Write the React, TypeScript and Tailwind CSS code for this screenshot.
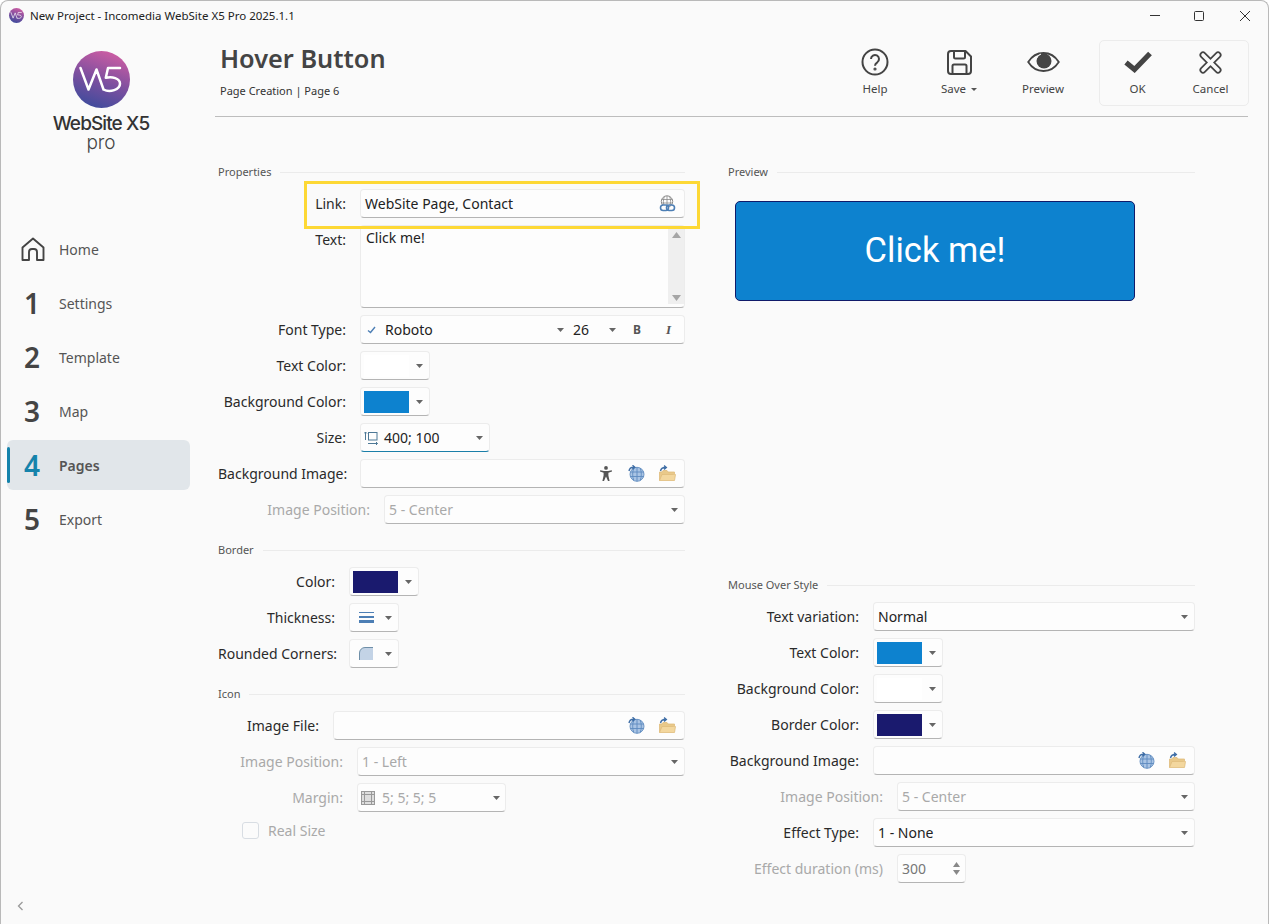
import React, { FunctionComponent, ReactNode } from 'react'
import clsx from 'clsx'

type Kids = { children?: ReactNode; className?: string }

const Caret: FunctionComponent<{ className?: string }> = ({ className }) => (
  <svg width="7" height="4" viewBox="0 0 7 4" className={clsx('shrink-0', className)}>
    <polygon points="0,0 7,0 3.5,4" fill="#666" />
  </svg>
)

const LogoMark: FunctionComponent<{ size: number; id: string }> = ({ size, id }) => (
  <svg width={size} height={size} viewBox="0 0 57 57">
    <defs>
      <linearGradient id={id} x1="0.7" y1="0" x2="0.35" y2="1">
        <stop offset="0" stopColor="#cf5da3" />
        <stop offset="0.55" stopColor="#7a4f9f" />
        <stop offset="1" stopColor="#3f4b9c" />
      </linearGradient>
    </defs>
    <circle cx="28.5" cy="28.5" r="28.5" fill={`url(#${id})`} />
    <path
      d="M7.5 17 L15.5 38.5 L23.5 18.5 L30.5 38.5 M47 17 H35 L32.8 26.8 C39 25.5 47 27 47 32.8 C47 38.5 37 42 30.5 38.5"
      fill="none"
      stroke="#fff"
      strokeWidth="2.5"
      strokeLinejoin="round"
      strokeLinecap="round"
    />
  </svg>
)

const GlobeLink = () => (
  <svg width="17" height="17" viewBox="0 0 17 17" fill="none">
    <circle cx="8" cy="6.5" r="5.7" stroke="#8a8a8a" strokeWidth="1" />
    <path d="M2.5 4.5h11M2.5 8h11M8 1v11M5.5 1.5c-1.5 3-1.5 7 0 10M10.5 1.5c1.5 3 1.5 7 0 10" stroke="#8a8a8a" strokeWidth="0.8" />
    <rect x="1.5" y="10" width="8" height="5.5" rx="2.7" fill="#fdfdfd" stroke="#4d7fb5" strokeWidth="1.6" />
    <rect x="7.5" y="10" width="8" height="5.5" rx="2.7" fill="none" stroke="#4d7fb5" strokeWidth="1.6" />
  </svg>
)

const GlobeArrow = () => (
  <svg width="17" height="17" viewBox="0 0 17 17" fill="none">
    <circle cx="9" cy="9.3" r="7" fill="#a9c4e4" stroke="#6f97c6" strokeWidth="1" />
    <path d="M2.3 7h13.5M2.3 11.5h13.5M9 2.3v14M5.8 3c-1.5 4-1.5 8.6 0 12.6M12.2 3c1.5 4 1.5 8.6 0 12.6" stroke="#5f8bbf" strokeWidth="0.9" />
    <path d="M1 6C1.5 3.3 3 2.2 5.5 2.2M4.5 0.3L6.8 2.2 4.5 4.1" stroke="#3f6ea6" strokeWidth="1.4" fill="none" />
  </svg>
)

const FolderArrow = () => (
  <svg width="17" height="17" viewBox="0 0 17 17" fill="none">
    <path d="M0.5 15.5V7h2.5l1-1.5h4l1 1.5h6.5v2" fill="#e9c98a" stroke="#e0bd7c" strokeWidth="0.8" />
    <path d="M0.5 15.5L3 9.5h13.5l-1 6z" fill="#f3d79e" stroke="#e0bd7c" strokeWidth="0.8" />
    <path d="M1.5 6C2 3.5 3.5 2.5 6 2.5M5 0.6L7.3 2.5 5 4.4" stroke="#3f6ea6" strokeWidth="1.4" fill="none" />
  </svg>
)

const Person = () => (
  <svg width="12" height="15" viewBox="0 0 12 15" fill="#555">
    <circle cx="6" cy="1.9" r="1.9" />
    <path d="M0.2 4.2L4 5h4l3.8-.8.2 1.3L8.4 6.7V9.5L9.6 15H8L6 10.5 4 15H2.4L3.6 9.5V6.7L0 5.5z" />
  </svg>
)

const Field: FunctionComponent<Kids> = ({ children, className }) => (
  <div
    className={clsx(
      'flex items-center rounded-[4px] border border-[#ececec] border-b-[#b4b4b4] bg-[#fdfdfd] text-[#222]',
      className,
    )}
  >
    {children}
  </div>
)

const Row: FunctionComponent<Kids & { label: string; labelW: string; off?: boolean }> = ({
  label,
  labelW,
  off,
  children,
  className,
}) => (
  <div className={clsx('flex h-[29px] items-center', className)}>
    <div className={clsx('shrink-0 whitespace-nowrap text-right', labelW, off ? 'text-[#a9a9a9]' : 'text-[#2a2a2a]')}>
      {label}
    </div>
    <div className="ml-[14px] flex min-w-0 flex-1">{children}</div>
  </div>
)

const Heading: FunctionComponent<Kids> = ({ children, className }) => (
  <div className={clsx('flex h-[14px] items-center gap-[9px] text-[11px] text-[#555]', className)}>
    <span>{children}</span>
    <div className="h-px flex-1 bg-[#ebebeb]" />
  </div>
)

const ColorPick: FunctionComponent<{ color: string }> = ({ color }) => (
  <Field className="h-[29px] w-[70px] pl-[3px]">
    <div className={clsx('h-[22px] w-[45px] shrink-0', color)} />
    <Caret className="ml-[7px]" />
  </Field>
)

const Select: FunctionComponent<Kids & { off?: boolean }> = ({ children, off, className }) => (
  <Field className={clsx('h-[29px] w-full pl-[4px] pr-[6px]', off && 'text-[#a9a9a9]', className)}>
    <span className="flex-1 truncate">{children}</span>
    <Caret />
  </Field>
)

const ToolButton: FunctionComponent<Kids & { label: ReactNode; width: string }> = ({ children, label, width }) => (
  <div className={clsx('flex flex-col items-center', width)}>
    <div className="flex h-[30px] items-center justify-center">{children}</div>
    <div className="mt-[4px] flex items-center gap-[5px] text-[11.5px] leading-[16px] text-[#444]">{label}</div>
  </div>
)

const Nav: FunctionComponent<Kids & { label: string; active?: boolean }> = ({ children, label, active }) => (
  <div className={clsx('relative ml-[6px] flex h-[50px] w-[183px] items-center rounded-[6px]', active && 'bg-[#e1e6ea]')}>
    {active && <div className="absolute left-0 top-[7px] h-[36px] w-[3px] rounded-full bg-[#1583ab]" />}
    <div className={clsx('flex w-[50px] justify-center text-[28px] font-semibold leading-none', active ? 'text-[#1583ab]' : 'text-[#444]')}>
      {children}
    </div>
    <div className={clsx('ml-[2px] text-[14px] text-[#555]', active && 'font-semibold text-[#444]')}>{label}</div>
  </div>
)

const App: FunctionComponent = () => {
  return (
    <div
      className="flex h-[924px] w-[1269px] flex-col overflow-hidden rounded-t-[8px] border-x border-t border-[#b9b9b9] bg-[#fafafa] text-[14px]"
      style={{ fontFamily: '"Noto Sans", sans-serif' }}
    >
      {/* title bar */}
      <div className="flex h-[29px] shrink-0 items-center">
        <div className="ml-[8px] mr-[6px]">
          <LogoMark size={15} id="tiny" />
        </div>
        <span className="text-[11.5px] text-[#222]">New Project - Incomedia WebSite X5 Pro 2025.1.1</span>
        <div className="ml-auto flex h-full text-[#333]">
          <div className="flex w-[45px] items-center justify-center">
            <div className="h-px w-[10px] bg-[#333]" />
          </div>
          <div className="flex w-[45px] items-center justify-center pr-[2px]">
            <div className="h-[10px] w-[10px] rounded-[1.5px] border border-[#333]" />
          </div>
          <div className="flex w-[46px] items-center justify-center">
            <svg width="10" height="10" viewBox="0 0 10 10" stroke="#333" strokeWidth="1">
              <path d="M0 0L10 10M10 0L0 10" />
            </svg>
          </div>
        </div>
      </div>

      <div className="flex min-h-0 flex-1">
        {/* sidebar */}
        <div className="relative flex w-[214px] shrink-0 flex-col">
          <div className="flex flex-col items-center pr-[14px] pt-[21px]">
            <LogoMark size={57} id="big" />
            <div
              className="mt-[6px] text-[19px] font-medium leading-[20px] tracking-[-0.9px] text-[#333]"
              style={{ fontFamily: 'Inter, sans-serif' }}
            >
              WebSite X5
            </div>
            <div
              className="text-[19px] font-light leading-[18px] text-[#444]"
              style={{ fontFamily: 'Inter, sans-serif' }}
            >
              pro
            </div>
          </div>
          <div className="mt-[72px] flex flex-col gap-[4px]">
            <Nav label="Home">
              <svg className="ml-[2px]" width="24" height="24" viewBox="0 0 24 24" fill="none" stroke="#444" strokeWidth="1.9" strokeLinejoin="round">
                <path d="M1.5 23V10.5L12 1.5l10.5 9V23h-6.5v-8a3 3 0 0 0-3-3h-2a3 3 0 0 0-3 3v8z" />
              </svg>
            </Nav>
            <Nav label="Settings">1</Nav>
            <Nav label="Template">2</Nav>
            <Nav label="Map">3</Nav>
            <Nav label="Pages" active>
              4
            </Nav>
            <Nav label="Export">5</Nav>
          </div>
          <svg className="absolute bottom-[13px] left-[16px]" width="7" height="10" viewBox="0 0 7 10" fill="none" stroke="#999" strokeWidth="1.3">
            <path d="M5.5 1L1.5 5l4 4" />
          </svg>
        </div>

        {/* main */}
        <div className="flex min-w-0 flex-1 flex-col">
          {/* header */}
          <div className="mr-[20px] flex h-[87px] shrink-0 border-b border-[#bdbdbd] pl-[5px]">
            <div>
              <div className="mt-[10px] text-[25.3px] font-semibold leading-[36px] text-[#444]">Hover Button</div>
              <div className="mt-[7px] text-[11px] leading-[16px] text-[#333]">Page Creation | Page 6</div>
            </div>
            <div className="-mr-px ml-auto flex items-start pt-[10px]">
              <div className="flex pt-[7px]">
                <ToolButton label="Help" width="w-[84px]">
                  <svg width="28" height="28" viewBox="0 0 28 28" fill="none" stroke="#444" strokeWidth="2">
                    <circle cx="14" cy="14" r="12.5" />
                    <path d="M10 11a4 4 0 1 1 6.3 3.3c-1.5 1-2.3 1.7-2.3 3.4" />
                    <circle cx="14" cy="21" r="0.6" fill="#444" />
                  </svg>
                </ToolButton>
                <ToolButton
                  width="w-[84px]"
                  label={
                    <>
                      Save
                      <svg width="6" height="3" viewBox="0 0 6 3">
                        <polygon points="0,0 6,0 3,3" fill="#555" />
                      </svg>
                    </>
                  }
                >
                  <svg width="25" height="25" viewBox="0 0 25 25" fill="none" stroke="#444" strokeWidth="2" strokeLinejoin="round">
                    <path d="M4 1h14.5L24 6.5V21a3 3 0 0 1-3 3H4a3 3 0 0 1-3-3V4a3 3 0 0 1 3-3z" />
                    <path d="M7 1v6a1.5 1.5 0 0 0 1.5 1.5h8A1.5 1.5 0 0 0 18 7V1" />
                    <path d="M5.5 24v-8a1.5 1.5 0 0 1 1.5-1.5h11a1.5 1.5 0 0 1 1.5 1.5v8" />
                  </svg>
                </ToolButton>
                <ToolButton label="Preview" width="w-[84px]">
                  <svg width="33" height="20" viewBox="0 0 33 20">
                    <path d="M1.2 10C5 4 10.5 1 16.5 1s11.5 3 15.3 9c-3.8 6-9.3 9-15.3 9S5 16 1.2 10z" fill="none" stroke="#444" strokeWidth="1.8" />
                    <circle cx="17" cy="9" r="7.5" fill="#444" />
                    <path d="M9.5 6.5A7 7 0 0 1 14 2" stroke="#fafafa" strokeWidth="1" fill="none" />
                  </svg>
                </ToolButton>
              </div>
              <div className="ml-[14px] flex h-[66px] w-[150px] rounded-[5px] border border-[#ececec] px-[1px] pt-[6px]">
                <ToolButton label="OK" width="w-[73px]">
                  <svg width="28" height="22" viewBox="0 0 28 22" fill="none" stroke="#444" strokeWidth="5.2">
                    <path d="M2 11.5L10.5 18.5 26 2.5" />
                  </svg>
                </ToolButton>
                <ToolButton label="Cancel" width="w-[73px]">
                  <svg width="23" height="23" viewBox="0 0 23 23" fill="none">
                    <path d="M4 4L19 19M19 4L4 19" stroke="#444" strokeWidth="7" strokeLinecap="round" />
                    <path d="M4 4L19 19M19 4L4 19" stroke="#fafafa" strokeWidth="3.6" strokeLinecap="round" />
                  </svg>
                </ToolButton>
              </div>
            </div>
          </div>

          {/* form */}
          <div className="flex gap-[43px] pl-[3px] pt-[48px]">
            <div className="flex w-[467px] flex-col">
              <Heading>Properties</Heading>
              <div className="relative mt-[10px]">
                <Row label="Link:" labelW="w-[128px]">
                  <Field className="h-[29px] w-full pl-[4px] pr-[8px]">
                    <span className="flex-1">WebSite Page, Contact</span>
                    <GlobeLink />
                  </Field>
                </Row>
                <div className="pointer-events-none absolute -bottom-[11px] -right-[15px] -top-[8px] left-[86px] border-[3px] border-[#fdd835]" />
              </div>
              <div className="mt-[7px] flex h-[83px] items-start">
                <div className="w-[128px] shrink-0 pt-[5px] text-right leading-[20px] text-[#2a2a2a]">Text:</div>
                <Field className="ml-[14px] h-[83px] flex-1 items-start pl-[5px]">
                  <span className="flex-1 pt-[2px] leading-[20px]">Click me!</span>
                  <div className="my-[3px] flex h-[calc(100%-6px)] w-[16px] flex-col items-center justify-between bg-[#efefef] py-[3px]">
                    <svg width="9" height="6" viewBox="0 0 9 6"><polygon points="0,6 9,6 4.5,0" fill="#a5a5a5" /></svg>
                    <svg width="9" height="6" viewBox="0 0 9 6"><polygon points="0,0 9,0 4.5,6" fill="#a5a5a5" /></svg>
                  </div>
                </Field>
              </div>
              <Row label="Font Type:" labelW="w-[128px]" className="mt-[7px]">
                <Field className="h-[29px] w-full">
                  <svg className="ml-[6px]" width="9" height="8" viewBox="0 0 9 8" fill="none" stroke="#4d7fb5" strokeWidth="1.4">
                    <path d="M1 4.5L3.5 6.5 8 1" />
                  </svg>
                  <span className="ml-[9px] w-[172px]">Roboto</span>
                  <Caret />
                  <span className="ml-[9px] w-[36px]">26</span>
                  <Caret />
                  <span className="ml-[17px] text-[12px] font-bold text-[#555]">B</span>
                  <span
                    className="ml-[25px] text-[13px] font-bold italic text-[#555]"
                    style={{ fontFamily: '"Liberation Serif", serif' }}
                  >
                    I
                  </span>
                </Field>
              </Row>
              <Row label="Text Color:" labelW="w-[128px]" className="mt-[7px]">
                <ColorPick color="bg-white" />
              </Row>
              <Row label="Background Color:" labelW="w-[128px]" className="mt-[7px]">
                <ColorPick color="bg-[#0d82cf]" />
              </Row>
              <Row label="Size:" labelW="w-[128px]" className="mt-[7px]">
                <Field className="h-[29px] w-[130px] border-b-[#1a7ea8]! pl-[3px] pr-[6px]">
                  <svg width="14" height="14" viewBox="0 0 14 14" fill="none" stroke="#4d7896" strokeWidth="1">
                    <rect x="4.5" y="1.5" width="8.5" height="7.5" />
                    <path d="M1.5 9V1M0 2.5L1.5 1 3 2.5M4 12.5h9.5M12 11l1.5 1.5-1.5 1.5" />
                  </svg>
                  <span className="ml-[6px] flex-1">400; 100</span>
                  <Caret />
                </Field>
              </Row>
              <Row label="Background Image:" labelW="w-[128px]" className="mt-[7px]">
                <Field className="h-[29px] w-full justify-end pr-[8px]">
                  <Person />
                  <div className="ml-[16px]">
                    <GlobeArrow />
                  </div>
                  <div className="ml-[14px]">
                    <FolderArrow />
                  </div>
                </Field>
              </Row>
              <Row label="Image Position:" labelW="w-[152px]" off className="mt-[7px]">
                <Select off>5 - Center</Select>
              </Row>

              <Heading className="mt-[19px]">Border</Heading>
              <Row label="Color:" labelW="w-[117px]" className="mt-[10px]">
                <ColorPick color="bg-[#1a1a6e]" />
              </Row>
              <Row label="Thickness:" labelW="w-[117px]" className="mt-[7px]">
                <Field className="h-[29px] w-[50px] pl-[9px]">
                  <svg width="15" height="11" viewBox="0 0 15 11" fill="#4d7fb5">
                    <rect y="0" width="15" height="1" />
                    <rect y="4" width="15" height="2" />
                    <rect y="8" width="15" height="3" />
                  </svg>
                  <Caret className="ml-[11px]" />
                </Field>
              </Row>
              <Row label="Rounded Corners:" labelW="w-[117px]" className="mt-[7px]">
                <Field className="h-[29px] w-[50px] pl-[9px]">
                  <svg width="14" height="13" viewBox="0 0 14 13">
                    <path d="M0.5 13V6A5.5 5.5 0 0 1 6 0.5h8V13z" fill="#c3d3e6" />
                    <path d="M0.5 13V6A5.5 5.5 0 0 1 6 0.5h8" fill="none" stroke="#6f8fa8" />
                  </svg>
                  <Caret className="ml-[12px]" />
                </Field>
              </Row>

              <Heading className="mt-[19px]">Icon</Heading>
              <Row label="Image File:" labelW="w-[101px]" className="mt-[10px]">
                <Field className="h-[29px] w-full justify-end gap-[14px] pr-[8px]">
                  <GlobeArrow />
                  <FolderArrow />
                </Field>
              </Row>
              <Row label="Image Position:" labelW="w-[125px]" off className="mt-[7px]">
                <Select off>1 - Left</Select>
              </Row>
              <Row label="Margin:" labelW="w-[125px]" off className="mt-[7px]">
                <Field className="h-[29px] w-[149px] pl-[3px] pr-[5px] text-[#a9a9a9]">
                  <svg width="14" height="14" viewBox="0 0 14 14" fill="#ddd" stroke="#999" strokeWidth="1">
                    <rect x="0.5" y="0.5" width="13" height="13" />
                    <path d="M3.5 0.5v13M10.5 0.5v13M0.5 3.5h13M0.5 10.5h13" />
                  </svg>
                  <span className="ml-[7px] flex-1">5; 5; 5; 5</span>
                  <Caret />
                </Field>
              </Row>
              <div className="ml-[24px] mt-[10px] flex h-[17px] items-center">
                <div className="h-[17px] w-[17px] rounded-[3px] border border-[#d8dde3] bg-[#fbfbfb]" />
                <span className="ml-[9px] text-[#a9a9a9]">Real Size</span>
              </div>
            </div>

            <div className="flex w-[467px] flex-col">
              <Heading>Preview</Heading>
              <div className="ml-[7px] mt-[22px] flex h-[100px] w-[400px] items-center justify-center rounded-[5px] border border-[#101a6a] bg-[#0d82cf] pb-[2px]">
                <span className="text-[34.5px] leading-none text-white" style={{ fontFamily: 'Roboto, sans-serif' }}>
                  Click me!
                </span>
              </div>

              <Heading className="mt-[277px]">Mouse Over Style</Heading>
              <Row label="Text variation:" labelW="w-[131px]" className="mt-[10px]">
                <Select>Normal</Select>
              </Row>
              <Row label="Text Color:" labelW="w-[131px]" className="mt-[7px]">
                <ColorPick color="bg-[#0d82cf]" />
              </Row>
              <Row label="Background Color:" labelW="w-[131px]" className="mt-[7px]">
                <ColorPick color="bg-white" />
              </Row>
              <Row label="Border Color:" labelW="w-[131px]" className="mt-[7px]">
                <ColorPick color="bg-[#1a1a6e]" />
              </Row>
              <Row label="Background Image:" labelW="w-[131px]" className="mt-[7px]">
                <Field className="h-[29px] w-full justify-end gap-[14px] pr-[8px]">
                  <GlobeArrow />
                  <FolderArrow />
                </Field>
              </Row>
              <Row label="Image Position:" labelW="w-[155px]" off className="mt-[7px]">
                <Select off>5 - Center</Select>
              </Row>
              <Row label="Effect Type:" labelW="w-[131px]" className="mt-[7px]">
                <Select>1 - None</Select>
              </Row>
              <Row label="Effect duration (ms)" labelW="w-[155px]" off className="mt-[7px]">
                <Field className="h-[29px] w-[69px] pl-[4px] pr-[5px] text-[#777]">
                  <span className="flex-1">300</span>
                  <div className="flex flex-col gap-[3px]">
                    <svg width="7" height="5" viewBox="0 0 7 5"><polygon points="0,5 7,5 3.5,0" fill="#888" /></svg>
                    <svg width="7" height="5" viewBox="0 0 7 5"><polygon points="0,0 7,0 3.5,5" fill="#888" /></svg>
                  </div>
                </Field>
              </Row>
            </div>
          </div>
        </div>
      </div>
    </div>
  )
}

export default App
